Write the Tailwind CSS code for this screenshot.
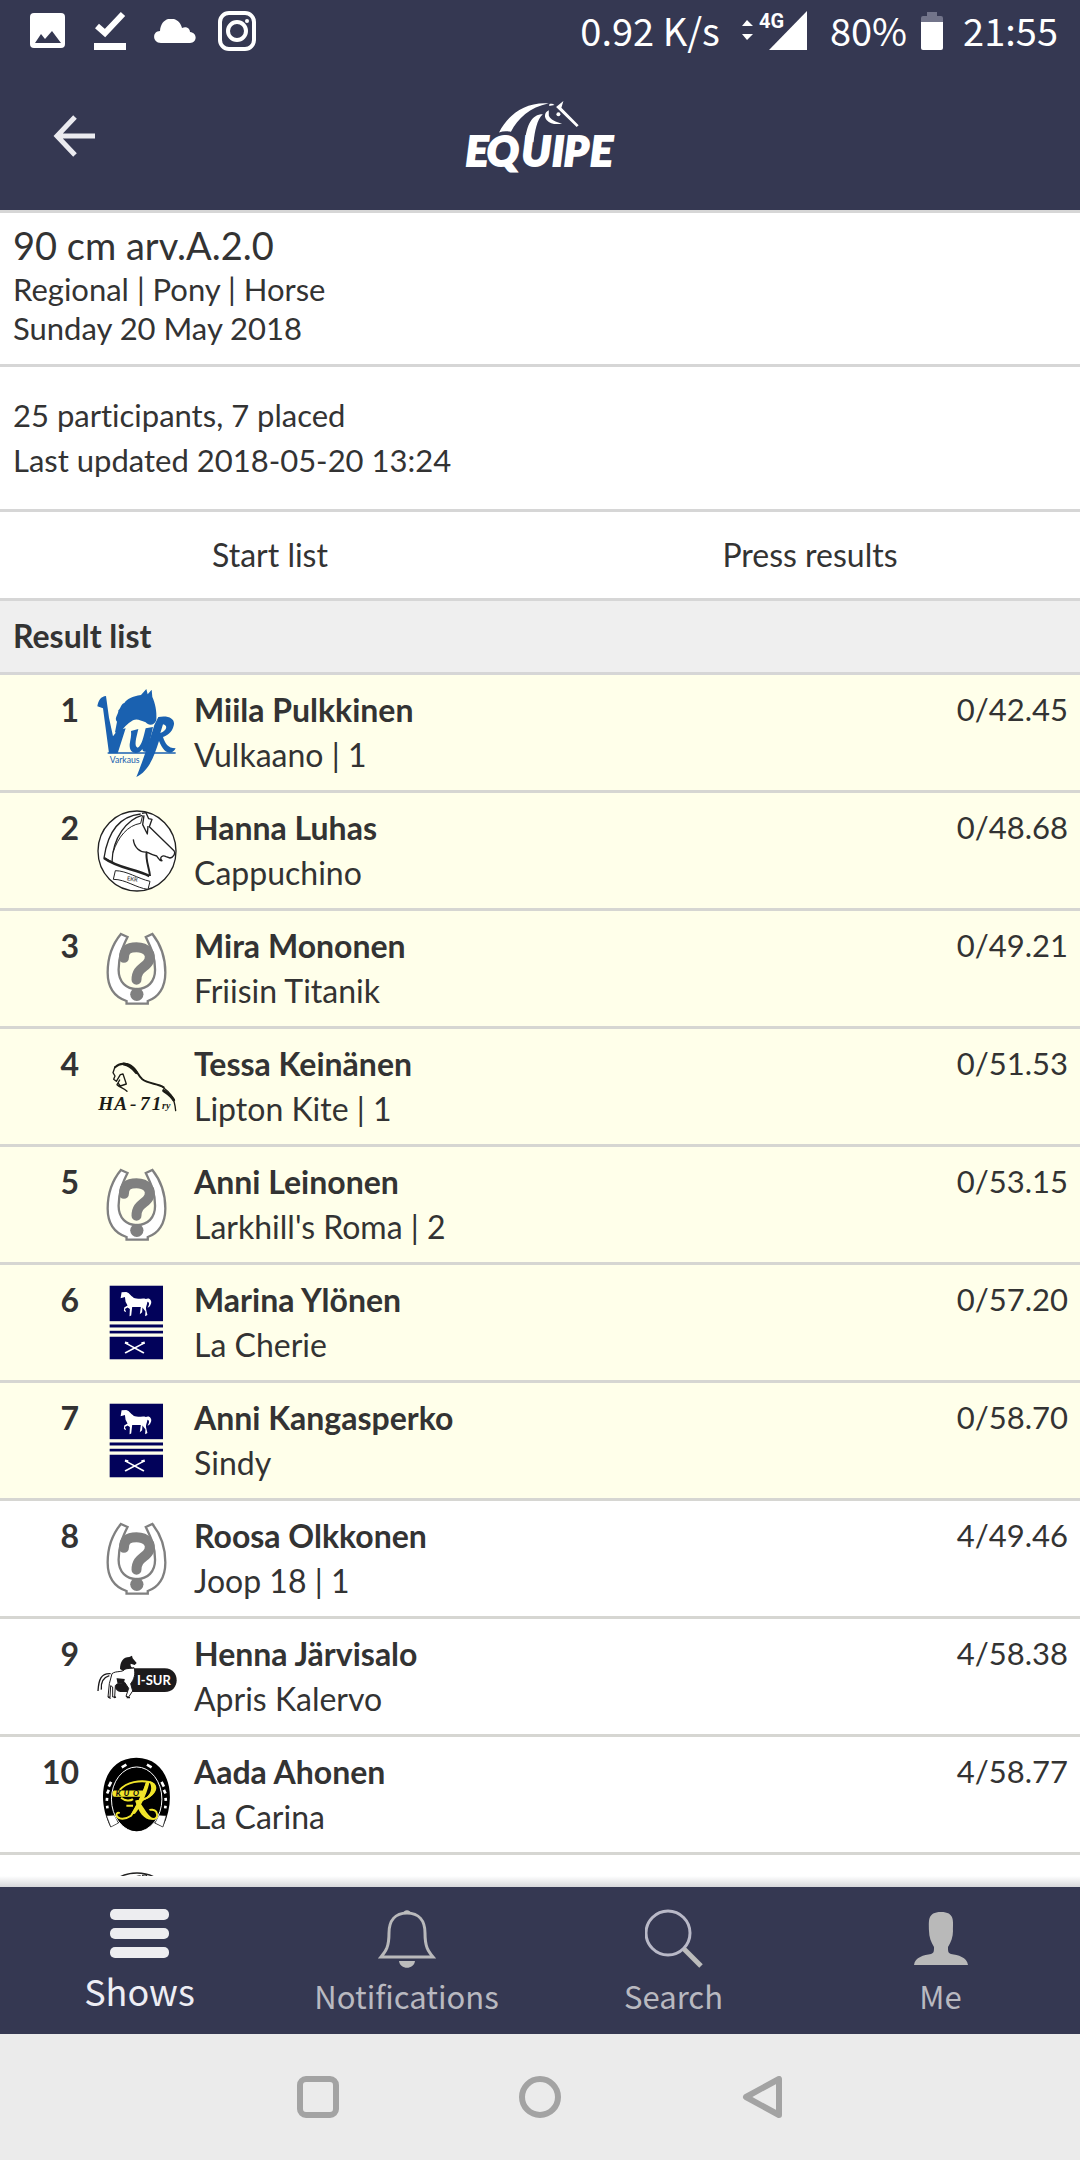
<!DOCTYPE html>
<html lang="en">
<head>
  <meta charset="UTF-8" />
  <title>Equipe - Result list</title>
  <meta name="viewport" content="width=device-width, initial-scale=1.0" />
  <script src="https://cdn.jsdelivr.net/npm/@tailwindcss/browser@4"></script>
</head>
<body class="h-screen flex flex-col overflow-hidden bg-white text-[#333333] text-[32px] font-['Lato',sans-serif] [font-variant-ligatures:none]">

  <!-- Shared club logos -->
  <svg class="hidden" aria-hidden="true">
    <symbol id="shoe" viewBox="78 64 184 220">
      <path d="M123 70 L143 79 C130 105 116 135 116 178 C116 216 140 236 171 236 C204 236 226 214 226 178 C226 135 212 108 198 79 L218 70 C242 100 257 140 257 186 C257 232 236 262 204 272 V280 H140 V272 C104 260 83 230 83 186 C83 140 98 100 123 70 Z" fill="#fff" stroke="#808080" stroke-width="7" />
      <path d="M132 142 C132 112 153 110 170 110 C202 110 216 132 208 150 C199 172 170 172 170 208" fill="none" stroke="#808080" stroke-width="30" stroke-linecap="round" />
      <circle cx="171" cy="252" r="20" fill="#808080" />
    </symbol>
    <symbol id="head" viewBox="49 418 240 246">
      <ellipse cx="169" cy="541" rx="117" ry="120" fill="#fff" stroke="#222" stroke-width="4" />
      <g fill="none" stroke="#222" stroke-width="4" stroke-linejoin="round">
        <path d="M180 430 C120 436 82 480 70 562 L98 576" />
        <path d="M184 434 C140 446 96 500 94 574" />
        <path d="M186 434 L180 458 C140 464 112 500 97 545" stroke-width="3" />
        <path d="M184 428 L196 426 L204 444 L214 446 L206 468 L280 540 C286 548 278 560 268 562 L256 558 C246 552 234 560 244 570 C236 572 232 560 228 556 C216 554 206 548 198 544 C178 546 160 530 158 506" />
        <path d="M190 434 L186 462 L200 490 L202 466" />
        <path d="M198 544 C194 570 206 590 208 616" stroke-width="6" />
        <path d="M70 562 C110 592 160 594 206 616" stroke-width="8" />
        <path d="M104 600 C138 600 172 624 208 632 L202 656 C166 652 136 626 98 626 Z" fill="#fff" stroke-width="3" />
      </g>
      <text x="138" y="629" font-size="17" font-weight="700" fill="#555" transform="rotate(8 138 629)">EKR</text>
    </symbol>
    <symbol id="flag" viewBox="86 76 166 226">
      <g fill="#02025a">
        <rect x="88" y="78" width="161" height="107" />
        <rect x="88" y="195" width="161" height="9" />
        <rect x="88" y="214" width="161" height="8" />
        <rect x="88" y="232" width="161" height="68" />
      </g>
      <path d="M121 116 L124 98 L138 97 C148 99 154 112 164 116 C176 120 188 114 197 118 C208 112 216 122 213 132 C210 140 208 144 202 144 C208 136 209 128 202 126 C201 136 196 142 198 150 L202 166 L195 170 L196 156 L187 144 L186 158 L179 164 L182 142 L156 142 L153 168 L148 170 L149 148 L142 144 L134 148 L138 158 L131 154 L132 144 L142 138 L136 126 L134 112 Z" fill="#fff" />
      <path d="M138 252 L190 280 M190 252 L136 280" stroke="#fff" stroke-width="5" stroke-linecap="round" />
      <path d="M134 250 L144 252 M184 252 L194 250" stroke="#fff" stroke-width="7" />
    </symbol>
  </svg>

  <header class="shrink-0 bg-[#353852] text-white border-b-[3px] border-[#d6d6d6]">
    <div class="h-[62px] flex items-center justify-between pl-[30px] pr-[22px] font-['Noto_Sans_CJK_SC',sans-serif] text-[38px]">
      <div class="flex items-center gap-[26px]">
        <svg class="w-9 h-9" viewBox="0 0 36 36"><rect width="35" height="35" rx="4" fill="#fff" /><path d="M5 30 L11 21 L15 26 L22 18 L31 30 Z" fill="#353852" /></svg>
        <svg class="w-9 h-10" viewBox="0 0 36 40"><path d="M5 15 L13 22 L31 3" fill="none" stroke="#fff" stroke-width="6" /><path d="M2 32 H34 V39 H2 Z" fill="#fff" /></svg>
        <svg class="w-[42px] h-6" viewBox="0 0 42 24"><path d="M7 24 C-2 24 -2 12 6 12 C7 -4 25 -4 28 9 C33 7 36 10 36 13 C44 14 43 24 36 24 Z" fill="#fff" /></svg>
        <svg class="w-[38px] h-10 -ml-1" viewBox="0 0 38 40" fill="none" stroke="#fff"><rect x="2" y="2" width="34" height="36" rx="9" stroke-width="4" /><circle cx="19" cy="20" r="9" stroke-width="4" /><circle cx="29" cy="10" r="2" fill="#fff" stroke="none" /></svg>
      </div>
      <div class="flex items-center">
        <span class="pb-1">0.92 K/s</span>
        <svg class="w-[66px] h-10 ml-[22px] overflow-visible" viewBox="0 0 66 40" fill="#fff">
          <path d="M0 15 L5 9 L11 15 Z M0 23 H11 L5 29 Z" />
          <path d="M27 39 L65 0 V39 Z" />
          <text x="17" y="17" font-size="20" font-weight="700" font-family="Roboto, sans-serif">4G</text>
        </svg>
        <span class="ml-[22px] pb-1">80%</span>
        <svg class="w-[22px] h-[38px] ml-3.5" viewBox="0 0 22 38"><path d="M6 0 H16 V4 H20 Q22 4 22 6 V10 H0 V6 Q0 4 2 4 H6 Z" fill="#72748a" /><path d="M0 10 H22 V36 Q22 38 20 38 H2 Q0 38 0 36 Z" fill="#fff" /></svg>
        <span class="ml-5 pb-1">21:55</span>
      </div>
    </div>
    <div class="h-[148px] grid grid-cols-3 items-center px-[53px]">
      <button type="button" aria-label="Back" class="w-[42px]">
        <svg class="w-[42px] h-[42px]" viewBox="0 0 42 42" fill="none" stroke="#ebebf0" stroke-width="5"><path d="M22 2 L4 21 L22 40 M4 21 H42" /></svg>
      </button>
      <svg class="w-[153px] h-[73px] justify-self-center overflow-visible" viewBox="70 45 460 220" role="img" aria-label="Equipe" fill="#fff">
        <path d="M178 143 C205 90 255 50 328 55 C270 68 235 100 214 141 C202 138 190 138 178 143 Z" />
        <path d="M256 170 C262 120 276 88 310 88 C292 104 286 140 282 172 Z" />
        <path d="M330 57 C336 56 342 57 345 60 L329 63 Z" />
        <path d="M328 76 C314 82 314 98 322 106 C332 117 350 120 368 116 C350 112 332 104 328 92 Z" />
        <path d="M372 48 L350 66 L412 126 L418 121 L366 68 Z" />
        <circle cx="357" cy="88" r="6" />
        <text y="245" x="77 141 246 338 373 452" font-size="128" font-weight="900" font-style="italic" stroke="#fff" stroke-width="6">EQUIPE</text>
      </svg>
    </div>
  </header>

  <main class="flex-1 min-h-0 overflow-hidden">
    <section class="pt-2 pb-4 px-[13px] text-[31px] leading-[39px] border-b-[3px] border-[#d6d6d6]">
      <h1 class="text-[38px] leading-[49px]">90 cm arv.A.2.0</h1>
      <p>Regional | Pony | Horse</p>
      <p>Sunday 20 May 2018</p>
    </section>
    <section class="py-[26px] px-[13px] text-[31px] leading-[45px] border-b-[3px] border-[#d6d6d6]">
      <p>25 participants, 7 placed</p>
      <p>Last updated 2018-05-20 13:24</p>
    </section>
    <nav class="h-[89px] grid grid-cols-2 items-center text-center border-b-[3px] border-[#d6d6d6]">
      <a href="#start">Start list</a>
      <a href="#press">Press results</a>
    </nav>
    <h2 class="h-[74px] px-[13px] pb-0.5 flex items-center font-bold bg-[#efefef] border-b-[3px] border-[#d6d6d6]">Result list</h2>

    <table class="w-full border-separate border-spacing-0 leading-[45px] [&_td]:h-[118px] [&_td]:p-0 [&_td]:border-b-[3px] [&_td]:border-[#d6d6d2] [&_td]:align-top">
      <tbody class="bg-[#ffffea]">
        <tr>
          <td class="w-[79px]"><div class="pt-3 text-right font-bold">1</div></td>
          <td class="w-[115px]"><div class="h-[115px] flex items-center justify-center">
            <svg class="w-20 h-[88px] overflow-visible" viewBox="50 54 240 264" fill="#1a61b0">
              <path d="M51 106 C54 88 62 76 77 75 L86 140 L98 196 L112 178 L136 172 L112 247 H86 L68 112 Z" />
              <path d="M104 184 L110 152 C100 142 116 128 114 118 C122 112 120 100 132 96 C140 84 156 76 182 72 L198 54 L202 70 L214 56 L216 78 C224 96 230 120 228 146 C224 162 206 166 196 154 C180 148 170 142 158 148 C140 158 128 172 116 190 Z" />
              <path d="M152 180 L174 174 C168 200 160 226 172 230 C184 226 190 196 196 172 L218 168 L202 240 C192 246 186 240 186 234 C176 252 146 252 148 220 C150 206 154 192 152 180 Z" />
              <path d="M234 138 C266 132 286 144 280 164 C276 184 258 194 248 198 C254 216 262 232 286 232 C274 254 252 250 236 210 C222 254 206 300 168 318 C184 280 204 220 222 162 Z M248 160 L240 186 C256 182 266 164 248 160 Z" fill-rule="evenodd" />
              <path d="M82 244 H286 V248 H82 Z" />
              <text x="88" y="277" font-size="26">Varkaus</text>
            </svg></div></td>
          <td><div class="pt-3 font-bold">Miila Pulkkinen</div><div>Vulkaano | 1</div></td>
          <td><div class="pt-3 pr-3 text-right text-[31px]">0/42.45</div></td>
        </tr>
        <tr>
          <td><div class="pt-3 text-right font-bold">2</div></td>
          <td><div class="h-[115px] flex items-center justify-center"><svg class="w-20 h-[82px]"><use href="#head" /></svg></div></td>
          <td><div class="pt-3 font-bold">Hanna Luhas</div><div>Cappuchino</div></td>
          <td><div class="pt-3 pr-3 text-right text-[31px]">0/48.68</div></td>
        </tr>
        <tr>
          <td><div class="pt-3 text-right font-bold">3</div></td>
          <td><div class="h-[115px] flex items-center justify-center"><svg class="w-[61px] h-[73px]"><use href="#shoe" /></svg></div></td>
          <td><div class="pt-3 font-bold">Mira Mononen</div><div>Friisin Titanik</div></td>
          <td><div class="pt-3 pr-3 text-right text-[31px]">0/49.21</div></td>
        </tr>
        <tr>
          <td><div class="pt-3 text-right font-bold">4</div></td>
          <td><div class="h-[115px] flex items-center justify-center">
            <svg class="w-20 h-[50px] overflow-visible" viewBox="50 452 240 150" fill="none" stroke="#1c1c16" stroke-linecap="round" stroke-linejoin="round">
              <path d="M104 468 C116 456 142 452 158 468 C172 480 172 492 186 504 C204 518 232 516 250 528" stroke-width="6" />
              <path d="M248 528 C264 540 282 552 286 598" stroke-width="4" />
              <path d="M250 538 C262 546 272 552 280 566 M130 458 C150 460 160 474 168 484" stroke-width="9" />
              <path d="M104 466 L98 484 L104 494 L100 504 L108 510 L120 490 L128 488 L138 518 L120 524 L114 516 M118 506 L110 520 C118 528 130 530 140 540" stroke-width="4" />
              <text x="54 102 149 179 214" y="596" font-size="58" font-family="Liberation Serif, serif" font-weight="700" font-style="italic" fill="#1c1c16" stroke="none">HA-71</text>
              <text x="245" y="594" font-size="30" font-family="Liberation Serif, serif" font-weight="700" font-style="italic" fill="#1c1c16" stroke="none">ry</text>
            </svg></div></td>
          <td><div class="pt-3 font-bold">Tessa Keinänen</div><div>Lipton Kite | 1</div></td>
          <td><div class="pt-3 pr-3 text-right text-[31px]">0/51.53</div></td>
        </tr>
        <tr>
          <td><div class="pt-3 text-right font-bold">5</div></td>
          <td><div class="h-[115px] flex items-center justify-center"><svg class="w-[61px] h-[73px]"><use href="#shoe" /></svg></div></td>
          <td><div class="pt-3 font-bold">Anni Leinonen</div><div>Larkhill's Roma | 2</div></td>
          <td><div class="pt-3 pr-3 text-right text-[31px]">0/53.15</div></td>
        </tr>
        <tr>
          <td><div class="pt-3 text-right font-bold">6</div></td>
          <td><div class="h-[115px] flex items-center justify-center"><svg class="w-[55px] h-[75px]"><use href="#flag" /></svg></div></td>
          <td><div class="pt-3 font-bold">Marina Ylönen</div><div>La Cherie</div></td>
          <td><div class="pt-3 pr-3 text-right text-[31px]">0/57.20</div></td>
        </tr>
        <tr>
          <td><div class="pt-3 text-right font-bold">7</div></td>
          <td><div class="h-[115px] flex items-center justify-center"><svg class="w-[55px] h-[75px]"><use href="#flag" /></svg></div></td>
          <td><div class="pt-3 font-bold">Anni Kangasperko</div><div>Sindy</div></td>
          <td><div class="pt-3 pr-3 text-right text-[31px]">0/58.70</div></td>
        </tr>
      </tbody>
      <tbody>
        <tr>
          <td><div class="pt-3 text-right font-bold">8</div></td>
          <td><div class="h-[115px] flex items-center justify-center"><svg class="w-[61px] h-[73px]"><use href="#shoe" /></svg></div></td>
          <td><div class="pt-3 font-bold">Roosa Olkkonen</div><div>Joop 18 | 1</div></td>
          <td><div class="pt-3 pr-3 text-right text-[31px]">4/49.46</div></td>
        </tr>
        <tr>
          <td><div class="pt-3 text-right font-bold">9</div></td>
          <td><div class="h-[115px] flex items-center justify-center">
            <svg class="w-20 h-11" viewBox="289 104 240 132">
              <path d="M384 144 H492 C540 144 540 215 492 215 H360 C340 212 336 190 350 176 Z" fill="#1c1a1c" />
              <path d="M334 160 C346 150 366 158 372 146 L400 142 C406 160 400 178 390 190 L396 212 L384 230 L376 228 L384 204 L372 186 C360 192 350 186 344 196 L342 230 L336 230 L336 200 L330 196 L328 230 L322 230 L326 190 Z" fill="#fff" stroke="#1c1a1c" stroke-width="3" />
              <path d="M292 212 C294 176 302 158 330 160 M302 208 C300 186 306 172 326 166" fill="none" stroke="#1c1a1c" stroke-width="4" />
              <path d="M358 146 C358 124 368 110 386 110 L394 106 L396 114 L408 128 L402 134 L390 130 C388 140 396 142 400 146 C388 142 376 142 368 152 Z" fill="#1c1a1c" />
              <path d="M350 176 L370 178 L368 187 L352 186 Z M322 230 L330 234 M340 232 L346 230 M378 232 L388 232" fill="#1c1a1c" stroke="#1c1a1c" stroke-width="4" />
              <text x="409" y="194" font-size="39" font-weight="700" fill="#fff">I-SUR</text>
            </svg></div></td>
          <td><div class="pt-3 font-bold">Henna Järvisalo</div><div>Apris Kalervo</div></td>
          <td><div class="pt-3 pr-3 text-right text-[31px]">4/58.38</div></td>
        </tr>
        <tr>
          <td><div class="pt-3 text-right font-bold">10</div></td>
          <td><div class="h-[115px] flex items-center justify-center">
            <svg class="w-[69px] h-[75px]" viewBox="305 413 207 226">
              <path d="M330 624 C282 528 312 415 408 415 C504 415 534 528 488 624 L462 612 H354 Z" fill="#000" />
              <path d="M318 590 L342 588 L354 612 L331 624 Z M498 590 L476 588 L464 612 L488 624 Z" fill="#fff" stroke="#222" stroke-width="2" />
              <ellipse cx="409" cy="540" rx="76" ry="97" fill="#000" stroke="#fff" stroke-width="3" />
              <ellipse cx="409" cy="546" rx="70" ry="91" fill="#000" />
              <path d="M364 444 L378 436 M440 436 L454 444 M325 502 L332 488 M320 523 L325 512 M319 545 L320 536 M321 568 L320 560 M484 488 L491 502 M491 512 L496 523 M496 536 L497 545 M496 560 L495 568" stroke="#fff" stroke-width="8" />
              <path d="M358 512 C380 488 420 482 446 488 C478 494 468 536 408 546 C424 550 436 596 458 600 C470 600 474 590 468 578 C462 572 450 570 448 574 M440 488 C430 530 404 570 392 590 C378 600 352 604 348 588 C348 580 354 580 358 582 M362 536 C374 546 390 546 398 540 M378 560 H398" fill="none" stroke="#f1e52a" stroke-width="6" />
              <path d="M438 488 L448 488 C438 532 416 570 404 584 L392 586 C410 556 426 520 438 488 Z M404 544 L418 546 C428 570 436 592 458 602 C432 604 416 582 404 544 Z M446 486 C482 492 474 530 424 546 C456 526 458 504 446 486 Z" fill="#f1e52a" />
              <path d="M340 514 H432 L424 533 H340 C334 526 334 520 340 514 Z" fill="#f1e52a" />
              <text x="346 370 398" y="532" font-size="24" font-weight="900" font-style="italic" fill="#111">KUO</text>
            </svg></div></td>
          <td><div class="pt-3 font-bold">Aada Ahonen</div><div>La Carina</div></td>
          <td><div class="pt-3 pr-3 text-right text-[31px]">4/58.77</div></td>
        </tr>
        <tr>
          <td></td>
          <td><div class="h-[115px] flex items-center justify-center"><svg class="w-20 h-[82px]"><use href="#head" /></svg></div></td>
          <td></td>
          <td></td>
        </tr>
      </tbody>
    </table>
  </main>

  <div class="shrink-0 h-[11px] bg-linear-to-b from-white to-[#d6d7da]"></div>

  <nav class="shrink-0 h-[147px] px-[6px] grid grid-cols-4 bg-[#353852] text-[#b9b9c0] font-['Noto_Sans_CJK_SC',sans-serif] text-[31px] leading-[46px]">
    <a href="#shows" class="pt-[22px] flex flex-col items-center gap-2 text-[#ededf4]">
      <svg class="w-[59px] h-[50px]" viewBox="0 0 59 50" fill="#ededf0"><rect width="59" height="11" rx="5" /><rect y="19" width="59" height="11" rx="5" /><rect y="38" width="59" height="11" rx="5" /></svg>
      <span class="text-[36px]">Shows</span>
    </a>
    <a href="#notifications" class="pt-[22px] flex flex-col items-center gap-1">
      <svg class="w-[58px] h-[60px]" viewBox="0 0 58 60"><path d="M29 4 C17 4 11 12 11 24 C11 38 8 42 3 48 H55 C50 42 47 38 47 24 C47 12 41 4 29 4 Z" fill="none" stroke="#b9b9bb" stroke-width="3" /><path d="M25 5 C25 0 33 0 33 5 Z M21 52 H37 C36 61 22 61 21 52 Z" fill="#bcbcbc" /></svg>
      <span>Notifications</span>
    </a>
    <a href="#search" class="pt-[22px] flex flex-col items-center gap-1">
      <svg class="w-[58px] h-[60px]" viewBox="0 0 58 60" fill="none" stroke="#b9b9c8"><circle cx="23" cy="24" r="22" stroke-width="3" /><path d="M39 40 L56 57" stroke="#bcbcbc" stroke-width="5" /></svg>
      <span>Search</span>
    </a>
    <a href="#me" class="pt-[22px] flex flex-col items-center gap-1">
      <svg class="w-[54px] h-[60px]" viewBox="0 0 54 60"><path d="M0 56 C1 48 10 46 17 45 C20 44 20 42 20 38 C17 33 15 28 15 22 C15 12 13 3 27 3 C41 3 39 12 39 22 C39 28 37 33 34 38 C34 42 34 44 37 45 C44 46 53 48 54 56 Z" fill="#b9b9b9" /></svg>
      <span>Me</span>
    </a>
  </nav>

  <footer class="shrink-0 h-[126px] flex items-center justify-center gap-[180px] bg-[#ebebeb]">
    <button type="button" aria-label="Recent apps"><svg class="w-[42px] h-[42px]" viewBox="0 0 42 42"><rect x="3" y="3" width="36" height="36" rx="6" fill="none" stroke="#a3a3a3" stroke-width="6" /></svg></button>
    <button type="button" aria-label="Home"><svg class="w-[42px] h-[42px]" viewBox="0 0 42 42"><circle cx="21" cy="21" r="18" fill="none" stroke="#a3a3a3" stroke-width="6" /></svg></button>
    <button type="button" aria-label="Back"><svg class="w-[42px] h-[42px]" viewBox="0 0 42 42"><path d="M38 3 V39 L5 21 Z" fill="none" stroke="#a3a3a3" stroke-width="6" stroke-linejoin="round" /></svg></button>
  </footer>

</body>
</html>
